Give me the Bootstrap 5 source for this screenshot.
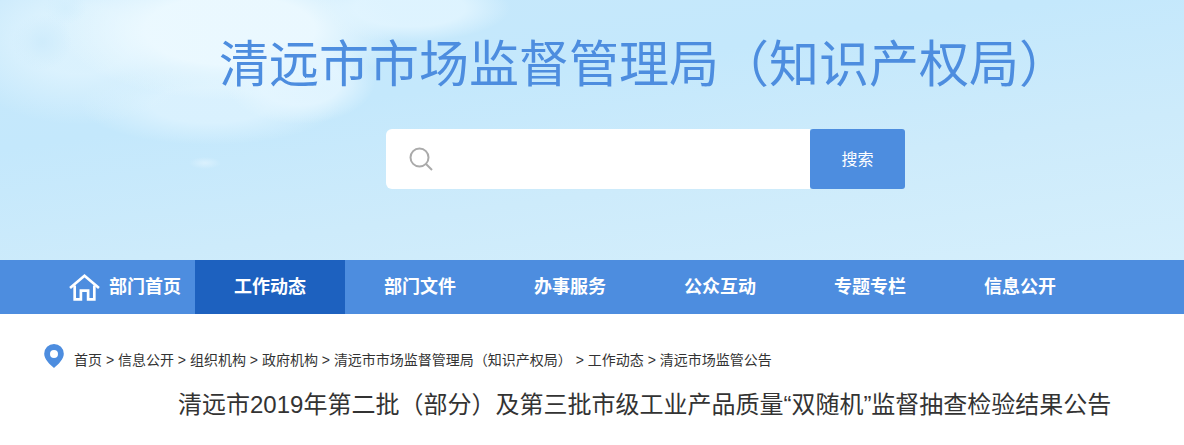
<!DOCTYPE html>
<html lang="zh-CN">
<head>
    <meta charset="UTF-8">
    <title>清远市市场监督管理局（知识产权局）</title>
    <link href="https://cdn.jsdelivr.net/npm/bootstrap@5.3.3/dist/css/bootstrap.min.css" rel="stylesheet">
    <style>
        body { font-family: "Liberation Sans", "Noto Sans CJK SC", sans-serif; overflow: hidden; background: #fff; }
        .top-banner {
            height: 260px;
            padding: 30px 0 0 220px;
            background:
                radial-gradient(ellipse 30px 28px at 42px 42px, rgba(203,234,251,.75), transparent),
                radial-gradient(ellipse 22px 16px at 65px 8px, rgba(208,237,252,.6), transparent),
                radial-gradient(ellipse 16px 6px at 205px 163px, rgba(226,244,254,.7), transparent),
                radial-gradient(ellipse 75px 42px at 300px 82px, rgba(229,246,255,.85) 55%, transparent),
                radial-gradient(ellipse 100px 34px at 410px 8px, rgba(226,245,255,.85) 55%, transparent),
                radial-gradient(ellipse 170px 70px at 230px 30px, rgba(236,249,255,.95) 50%, transparent),
                radial-gradient(ellipse 130px 85px at 80px 40px, rgba(224,244,254,.8) 40%, transparent),
                radial-gradient(ellipse 130px 40px at 210px 105px, rgba(226,245,255,.7) 45%, transparent),
                linear-gradient(172deg, #c7e8fb 0%, #c4e8fc 35%, #cdebfb 65%, #d5effc 100%);
        }
        .site-name { font-size: 50px; line-height: 70px; color: #4d8ddf; font-weight: 400; margin: 0 0 0 -1px; white-space: nowrap; }
        .search-box { width: 519px; height: 60px; margin: 29px 0 0 166px; }
        .search-field { width: 424px; border-radius: 6px 0 0 6px; padding-left: 23px; }
        .search-field input { border: 0; outline: 0; flex: 1; min-width: 0; margin-left: 10px; height: 100%; background: transparent; }
        .search-btn { width: 95px; height: 60px; border: 0; border-radius: 3px; background: #4d8ddf; color: #fff; font-size: 16px; padding: 2px 0 0; }
        .main-nav { height: 54px; background: #4d8ddf; padding-left: 45px; }
        .main-nav a { width: 150px; height: 54px; color: #fff; font-size: 18px; font-weight: 700; text-decoration: none; padding-top: 1px; }
        .main-nav a.nav-home { width: 150px; gap: 9px; padding-left: 24px; }
        .main-nav a.nav-now { background: #1d61bf; }
        .crumb-row { height: 26px; margin: 30px 0 0 44px; font-size: 14px; color: #333; white-space: nowrap; }
        .crumb-row svg { margin: 0 10px 0 0; flex: none; align-self: flex-start; }
        .crumb-row span { line-height: 20px; padding-top: 6px; }
        .crumb-row a { color: #333; text-decoration: none; }
        .article-title { font-size: 24px; line-height: 36px; color: #333; font-weight: 400; margin: 17px 0 0 178px; white-space: nowrap; }
    </style>
</head>
<body>
    <!-- 顶部 -->
    <header class="top-banner">
        <h1 class="site-name">清远市市场监督管理局（知识产权局）</h1>
        <form class="search-box d-flex">
            <div class="search-field d-flex align-items-center bg-white">
                <svg width="24" height="24" viewBox="0 0 24 24" fill="none" stroke="#aaa" stroke-width="2">
                    <circle cx="10.5" cy="10.5" r="9"/>
                    <path d="M17 17l6 6"/>
                </svg>
                <input type="text" aria-label="搜索">
            </div>
            <button type="button" class="search-btn">搜索</button>
        </form>
    </header>

    <!-- 导航 -->
    <nav class="main-nav d-flex">
        <a href="#" class="nav-home d-flex align-items-center">
            <svg width="31" height="27" viewBox="0 0 30 26" fill="none" stroke="#fff" stroke-width="2.6" stroke-linejoin="miter" class="flex-shrink-0">
                <path d="M1 13.500L15 1.700l14 11.800"/>
                <path d="M5.500 11v13.500h6V16h7v8.500h6V11"/>
            </svg>
            部门首页
        </a>
        <a href="#" class="nav-now d-flex align-items-center justify-content-center">工作动态</a>
        <a href="#" class="d-flex align-items-center justify-content-center">部门文件</a>
        <a href="#" class="d-flex align-items-center justify-content-center">办事服务</a>
        <a href="#" class="d-flex align-items-center justify-content-center">公众互动</a>
        <a href="#" class="d-flex align-items-center justify-content-center">专题专栏</a>
        <a href="#" class="d-flex align-items-center justify-content-center">信息公开</a>
    </nav>

    <!-- 面包屑 -->
    <div class="crumb-row d-flex">
        <svg width="20" height="24" viewBox="0 0 20 24">
            <path fill="#4d8ddf" fill-rule="evenodd" d="M10 0a9.8 9.8 0 0 1 9.8 9.8c0 5.4-5.6 10.8-9.8 14.2C5.800 20.600.2 15.200.2 9.800A9.800 9.800 0 0 1 10 0zm0 6a4 4 0 1 0 0 8 4 4 0 0 0 0-8z"/>
        </svg>
        <span><a href="#">首页</a> &gt; <a href="#">信息公开</a> &gt; <a href="#">组织机构</a> &gt; <a href="#">政府机构</a> &gt; <a href="#">清远市市场监督管理局（知识产权局）</a> &gt; <a href="#">工作动态</a> &gt; <a href="#">清远市场监管公告</a></span>
    </div>

    <h2 class="article-title">清远市2019年第二批（部分）及第三批市级工业产品质量“双随机”监督抽查检验结果公告</h2>

    <script src="https://cdn.jsdelivr.net/npm/bootstrap@5.3.3/dist/js/bootstrap.bundle.min.js"></script>
</body>
</html>
